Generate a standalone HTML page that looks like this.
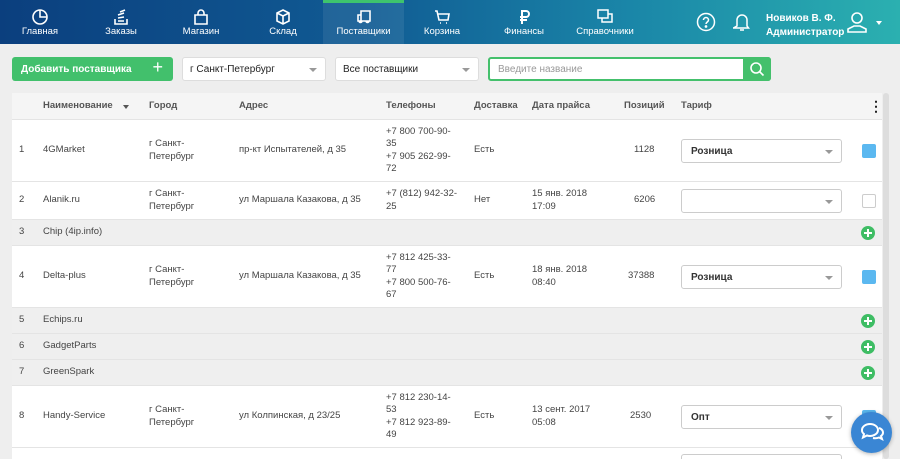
<!DOCTYPE html>
<html><head><meta charset="utf-8"><style>
*{box-sizing:border-box;margin:0;padding:0}
html,body{width:900px;height:459px;overflow:hidden}
body{background:#eeeeee;font-family:"Liberation Sans",sans-serif;position:relative;color:#333}
.nav{position:absolute;left:0;top:0;width:900px;height:44px;background:linear-gradient(90deg,#0b3f7e 0%,#105a93 40%,#1a86a8 70%,#2bb0b0 100%)}
.tab{position:absolute;top:0;height:44px;color:#fff;font-size:9.5px;text-align:center}
.tab svg{position:absolute;top:8px;left:50%;margin-left:-9px}
.tab span{position:absolute;top:26px;left:0;right:0;white-space:nowrap}
.act{background:rgba(255,255,255,.08)}
.act:before{content:"";position:absolute;left:0;right:0;top:0;height:3px;background:#3ec46d}
.btn{position:absolute;left:12px;top:57px;width:161px;height:24px;background:#42c06c;border-radius:3px;color:#fff;font-size:10px;font-weight:bold;padding:7px 0 0 9px}
.sel{position:absolute;top:57px;height:24px;background:#fff;border:1px solid #ddd;border-radius:3px;font-size:10px;padding:6px 0 0 7px;color:#222}
.sel:after,.tsel:after{content:"";position:absolute;right:8px;top:10px;border:4px solid transparent;border-top:4px solid #999}
.search{position:absolute;left:488px;top:57px;width:283px;height:24px;border:2px solid #44c06c;border-radius:3px;background:#fff;font-size:10px;color:#999;padding:5px 0 0 8px}
.sbtn{position:absolute;right:-2px;top:-2px;width:28px;height:24px;background:#44c06c;border-radius:0 3px 3px 0}
.tbl{position:absolute;left:12px;top:93px;width:870px;height:366px;background:#fff;overflow:hidden}
.scroll{position:absolute;left:883px;top:93px;width:6px;height:366px;background:#ddd;border-radius:3px}
.row{position:absolute;left:0;width:870px;border-bottom:1px solid #e4e4e4;font-size:9.5px;color:#444}
.row.g{background:#efefef}
.row.h{background:#f5f5f5;font-weight:bold;color:#555}
.c{position:absolute;top:0;height:100%;display:flex;align-items:center;line-height:12.5px}
.tsel{position:absolute;left:669px;width:161px;height:24px;border:1px solid #ccc;border-radius:3px;font-size:10px;font-weight:bold;color:#333;padding:6px 0 0 9px;background:#fff}
.cb{position:absolute;left:850px;width:14px;height:14px;border-radius:2px;border:1px solid #ccc;background:#fff}
.cb.on{background:#5bb8f0;border-color:#5bb8f0}
.plus{position:absolute;left:849px;width:14px;height:14px;border-radius:50%;background:#3ebd64}
.plus:before{content:"";position:absolute;left:3px;top:6px;width:8px;height:2px;background:#fff}
.plus:after{content:"";position:absolute;left:6px;top:3px;width:2px;height:8px;background:#fff}
</style></head><body>
<div class="nav">
<div class="tab" style="left:12px;width:56px"><svg width="18" height="18" viewBox="0 0 18 18" fill="none" stroke="#fff" stroke-width="1.6"><circle cx="9" cy="9" r="7"/><path d="M9 2v7h7"/></svg><span>Главная</span></div>
<div class="tab" style="left:95px;width:52px"><svg width="18" height="18" viewBox="0 0 18 18" fill="none" stroke="#fff" stroke-width="1.6"><path d="M3 11v5h12v-5M6 13h6M6 10l6-1M6 7l6-2M8 4l5-2"/></svg><span>Заказы</span></div>
<div class="tab" style="left:175px;width:52px"><svg width="18" height="18" viewBox="0 0 18 18" fill="none" stroke="#fff" stroke-width="1.6"><path d="M3 7h12v9H3zM6 7V5a3 3 0 016 0v2"/></svg><span>Магазин</span></div>
<div class="tab" style="left:257px;width:52px"><svg width="18" height="18" viewBox="0 0 18 18" fill="none" stroke="#fff" stroke-width="1.6"><path d="M9 2l6 3v8l-6 3-6-3V5zM3 5l6 3 6-3M9 8v8"/></svg><span>Склад</span></div>
<div class="tab act" style="left:323px;width:81px"><svg width="18" height="18" viewBox="0 0 18 18" fill="none" stroke="#fff" stroke-width="1.6"><path d="M6 3h9v10H6zM6 7H3v6h3M4 13a1.5 1.5 0 003 0M11 13a1.5 1.5 0 003 0"/></svg><span>Поставщики</span></div>
<div class="tab" style="left:418px;width:48px"><svg width="18" height="18" viewBox="0 0 18 18" fill="none" stroke="#fff" stroke-width="1.6"><path d="M2 3h2l2 9h9l1-6H5M7 15h1M13 15h1"/></svg><span>Корзина</span></div>
<div class="tab" style="left:500px;width:48px"><svg width="18" height="18" viewBox="0 0 18 18" fill="none" stroke="#fff" stroke-width="2"><path d="M7 16V3h4a3 3 0 010 6H5M5 12h7"/></svg><span>Финансы</span></div>
<div class="tab" style="left:572px;width:66px"><svg width="18" height="18" viewBox="0 0 18 18" fill="none" stroke="#fff" stroke-width="1.5"><rect x="2" y="2" width="10" height="8"/><path d="M6 10v4h10V6h-4"/></svg><span>Справочники</span></div>
<svg style="position:absolute;left:696px;top:12px" width="20" height="20" viewBox="0 0 20 20" fill="none" stroke="#fff" stroke-width="1.5"><circle cx="10" cy="10" r="8.5"/><path d="M7.5 8a2.5 2.5 0 115 0c0 2-2.5 2-2.5 4"/><circle cx="10" cy="14.5" r=".6" fill="#fff"/></svg>
<svg style="position:absolute;left:733px;top:12px" width="18" height="20" viewBox="0 0 18 20" fill="none" stroke="#fff" stroke-width="1.5"><path d="M4 14V8a5 5 0 0110 0v6l1.5 2h-15zM7 18h4"/></svg>
<div style="position:absolute;left:766px;top:12px;color:#fff;font-size:10px;font-weight:bold;line-height:14px">Новиков В. Ф.<br>Администратор</div>
<svg style="position:absolute;left:845px;top:10px" width="24" height="24" viewBox="0 0 24 24" fill="none" stroke="#fff" stroke-width="1.6"><circle cx="12" cy="8" r="5"/><path d="M3 22v-3l6-3h6l6 3v3z"/></svg>
<div style="position:absolute;left:876px;top:21px;border:3.5px solid transparent;border-top:4px solid #fff"></div>
</div>
<div class="btn">Добавить поставщика<span style="position:absolute;right:10px;top:1px;font-size:18px;font-weight:normal;line-height:18px">+</span></div>
<div class="sel" style="left:182px;width:144px">г Санкт-Петербург</div>
<div class="sel" style="left:335px;width:144px">Все поставщики</div>
<div class="search">Введите название<div class="sbtn"><svg width="28" height="24" viewBox="0 0 28 24" fill="none" stroke="#fff" stroke-width="1.6"><circle cx="13" cy="11" r="5"/><path d="M16.5 14.5l4 4"/></svg></div></div>
<div class="tbl">
<div class="row h" style="top:0;height:27px">
<div class="c" style="left:31px">Наименование<span style="margin-left:10px;border:3.5px solid transparent;border-top:4px solid #555;margin-top:4px"></span></div>
<div class="c" style="left:137px">Город</div><div class="c" style="left:227px">Адрес</div><div class="c" style="left:374px">Телефоны</div><div class="c" style="left:462px">Доставка</div><div class="c" style="left:520px">Дата прайса</div><div class="c" style="left:612px">Позиций</div><div class="c" style="left:669px">Тариф</div>
<div class="c" style="left:857px;font-size:14px;color:#222">⋮</div></div>

<div class="row" style="top:27px;height:62px"><div class="c" style="left:7px">1</div><div class="c" style="left:31px">4GMarket</div><div class="c" style="left:137px">г Санкт-<br>Петербург</div><div class="c" style="left:227px">пр-кт Испытателей, д 35</div><div class="c" style="left:374px">+7 800 700-90-<br>35<br>+7 905 262-99-<br>72</div><div class="c" style="left:462px">Есть</div><div class="c" style="left:622px">1128</div><div class="tsel" style="top:19px">Розница</div><div class="cb on" style="top:24px"></div></div>

<div class="row" style="top:89px;height:38px"><div class="c" style="left:7px">2</div><div class="c" style="left:31px">Alanik.ru</div><div class="c" style="left:137px">г Санкт-<br>Петербург</div><div class="c" style="left:227px">ул Маршала Казакова, д 35</div><div class="c" style="left:374px">+7 (812) 942-32-<br>25</div><div class="c" style="left:462px">Нет</div><div class="c" style="left:520px">15 янв. 2018<br>17:09</div><div class="c" style="left:622px">6206</div><div class="tsel" style="top:7px"></div><div class="cb" style="top:12px"></div></div>

<div class="row g" style="top:127px;height:26px"><div class="c" style="left:7px">3</div><div class="c" style="left:31px">Chip (4ip.info)</div><div class="plus" style="top:6px"></div></div>

<div class="row" style="top:153px;height:62px"><div class="c" style="left:7px">4</div><div class="c" style="left:31px">Delta-plus</div><div class="c" style="left:137px">г Санкт-<br>Петербург</div><div class="c" style="left:227px">ул Маршала Казакова, д 35</div><div class="c" style="left:374px">+7 812 425-33-<br>77<br>+7 800 500-76-<br>67</div><div class="c" style="left:462px">Есть</div><div class="c" style="left:520px">18 янв. 2018<br>08:40</div><div class="c" style="left:616px">37388</div><div class="tsel" style="top:19px">Розница</div><div class="cb on" style="top:24px"></div></div>

<div class="row g" style="top:215px;height:26px"><div class="c" style="left:7px">5</div><div class="c" style="left:31px">Echips.ru</div><div class="plus" style="top:6px"></div></div>
<div class="row g" style="top:241px;height:26px"><div class="c" style="left:7px">6</div><div class="c" style="left:31px">GadgetParts</div><div class="plus" style="top:6px"></div></div>
<div class="row g" style="top:267px;height:26px"><div class="c" style="left:7px">7</div><div class="c" style="left:31px">GreenSpark</div><div class="plus" style="top:6px"></div></div>

<div class="row" style="top:293px;height:62px"><div class="c" style="left:7px">8</div><div class="c" style="left:31px">Handy-Service</div><div class="c" style="left:137px">г Санкт-<br>Петербург</div><div class="c" style="left:227px">ул Колпинская, д 23/25</div><div class="c" style="left:374px">+7 812 230-14-<br>53<br>+7 812 923-89-<br>49</div><div class="c" style="left:462px">Есть</div><div class="c" style="left:520px">13 сент. 2017<br>05:08</div><div class="c" style="left:618px">2530</div><div class="tsel" style="top:19px">Опт</div><div class="cb on" style="top:24px"></div></div>
<div class="row" style="top:355px;height:40px"><div class="tsel" style="top:6px"></div></div>
</div>
<div class="scroll"></div>
<div style="position:absolute;left:851px;top:412px;width:41px;height:41px;border-radius:50%;background:#3a86d4;box-shadow:0 1px 4px rgba(0,0,0,.3)"><svg width="41" height="41" viewBox="0 0 41 41" fill="none" stroke="#fff" stroke-width="2"><path d="M11 18a8 6 0 0116 0a8 6 0 01-11 5.5l-4 2 1-3.5a6 5 0 01-2-4z"/><path d="M28 16a7 5 0 012 8l1 3-3-1.5a8 6 0 01-6 .5"/></svg></div>
</body></html>
